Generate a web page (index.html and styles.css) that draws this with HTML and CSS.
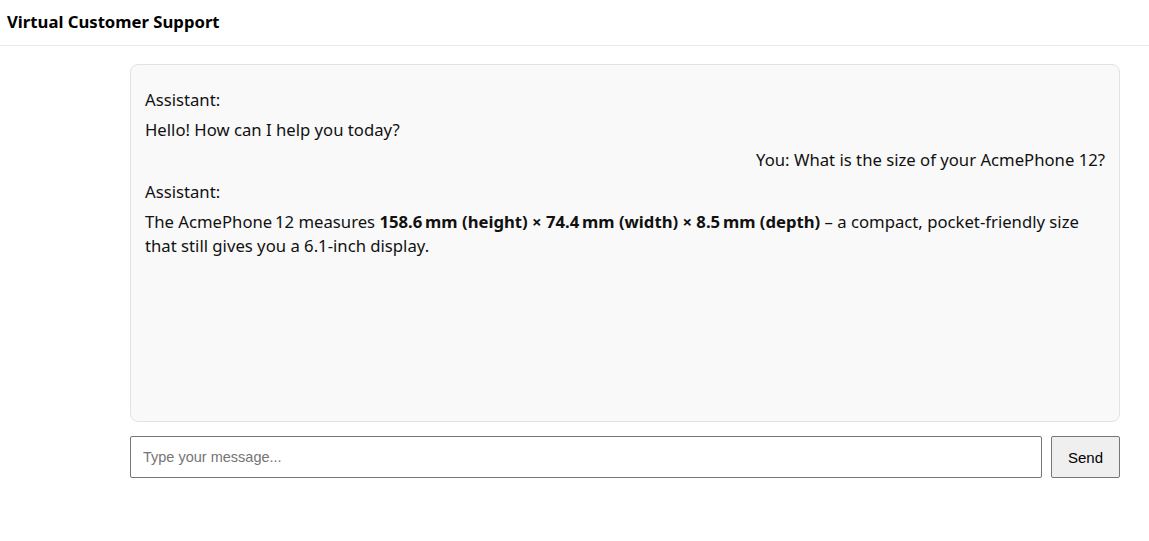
FILE: index.html
```html
<!DOCTYPE html>
<html lang="en">
<head>
<meta charset="utf-8">
<title>Virtual Customer Support</title>
<link rel="stylesheet" href="styles.css">
</head>
<body>
<header class="topbar">
  <h1 class="title">Virtual Customer Support</h1>
</header>
<main class="main">
  <section class="chat">
    <div class="msg assistant">
      <div class="who">Assistant:</div>
      <div class="text">Hello! How can I help you today?</div>
    </div>
    <div class="msg user">
      <div class="text">You: What is the size of your AcmePhone 12?</div>
    </div>
    <div class="msg assistant">
      <div class="who">Assistant:</div>
      <div class="text">The AcmePhone&#8239;12 measures <strong>158.6&#8239;mm (height) × 74.4&#8239;mm (width) × 8.5&#8239;mm (depth)</strong> – a compact, pocket‑friendly size that still gives you a 6.1‑inch display.</div>
    </div>
  </section>
  <form class="composer">
    <input class="field" type="text" placeholder="Type your message...">
    <button class="send" type="button">Send</button>
  </form>
</main>
</body>
</html>
```
FILE: styles.css
```css
html, body {
  margin: 0;
  padding: 0;
  background: #ffffff;
}
body {
  font-family: "Noto Sans", "Open Sans", sans-serif;
  color: #111;
}
.topbar {
  height: 45px;
  border-bottom: 1px solid #e8e8e8;
  display: flex;
  align-items: center;
  padding: 0 7px;
}
.title {
  margin: 0 0 2px 0;
  font-size: 16.7px;
  font-weight: 700;
  color: #000;
}
.main {
  width: 990px;
  margin-left: 130px;
  padding-top: 18px;
}
.chat {
  height: 358px;
  box-sizing: border-box;
  background: #f9f9f9;
  border: 1px solid #e2e2e2;
  border-radius: 8px;
  padding: 23px 14px 15px 14px;
  display: flex;
  flex-direction: column;
  gap: 6px;
  font-size: 16.7px;
  line-height: 24px;
}
.msg {
  display: flex;
  flex-direction: column;
  gap: 6px;
}
.msg.user {
  text-align: right;
  margin-bottom: 2px;
}
.text strong {
  font-weight: 700;
}
.composer {
  margin-top: 14px;
  display: flex;
  gap: 9px;
}
.field {
  flex: 1;
  height: 42px;
  box-sizing: border-box;
  border: 1px solid #767676;
  border-radius: 2px;
  padding: 0 12px;
  font-family: "Liberation Sans", Arial, sans-serif;
  font-size: 14.5px;
  background: #fff;
}
.field::placeholder {
  color: #757575;
}
.send {
  width: 69px;
  height: 42px;
  box-sizing: border-box;
  border: 1px solid #767676;
  border-radius: 2px;
  background: #efefef;
  font-family: "Liberation Sans", Arial, sans-serif;
  font-size: 15px;
  color: #000;
}
```
